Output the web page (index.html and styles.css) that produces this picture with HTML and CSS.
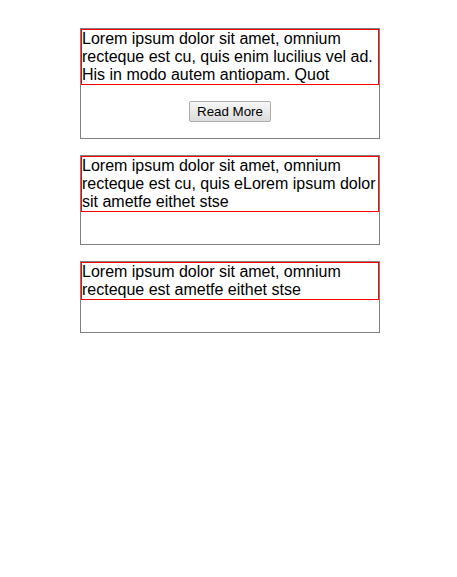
FILE: index.html
```html
<!DOCTYPE html>
<html>
<head>
<meta charset="utf-8">
<link rel="stylesheet" href="styles.css">
</head>
<body>
<div class="list">
  <div class="card">
    <div class="card-text">Lorem ipsum dolor sit amet, omnium recteque est cu, quis enim lucilius vel ad. His in modo autem antiopam. Quot</div>
    <div class="card-foot"><button class="btn">Read More</button></div>
  </div>
  <div class="card">
    <div class="card-text">Lorem ipsum dolor sit amet, omnium recteque est cu, quis eLorem ipsum dolor sit ametfe eithet stse</div>
    <div class="card-foot"></div>
  </div>
  <div class="card">
    <div class="card-text">Lorem ipsum dolor sit amet, omnium recteque est ametfe eithet stse</div>
    <div class="card-foot"></div>
  </div>
</div>
</body>
</html>
```
FILE: styles.css
```css
html, body {
  margin: 0;
  padding: 0;
  background: #fff;
}
body {
  font-family: "Liberation Sans", Arial, sans-serif;
  font-size: 16px;
  color: #000;
}
.list {
  width: 300px;
  margin: 28px 0 0 80px;
  display: flex;
  flex-direction: column;
  gap: 16px;
}
.card {
  border: 1px solid #808080;
}
.card-text {
  border: 1px solid #ff0000;
  line-height: 18px;
}
.card-foot {
  padding: 16px 0;
  text-align: center;
}
.btn {
  font-family: "Liberation Sans", Arial, sans-serif;
  font-size: 13.33px;
  color: #000;
  width: 82px;
  height: 21px;
  padding: 0;
  border: 1px solid #acacac;
  border-radius: 2px;
  background: linear-gradient(#f6f6f6, #dcdcdc);
  display: inline-block;
  vertical-align: top;
}
```
